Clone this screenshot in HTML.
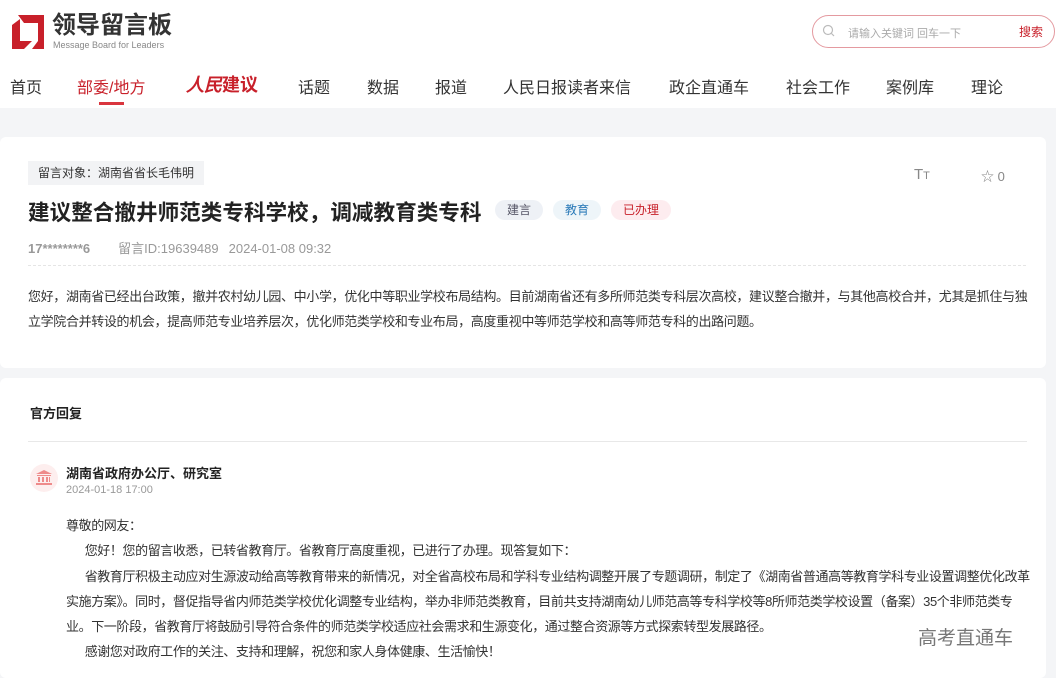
<!DOCTYPE html>
<html><head><meta charset="utf-8"><style>
*{margin:0;padding:0;box-sizing:border-box}
body{width:1056px;height:674px;overflow:hidden;background:#f4f5f7;font-family:"Liberation Sans","Noto Sans CJK SC",sans-serif;color:#333;position:relative}
.hdr{position:absolute;left:0;top:0;width:1056px;height:108px;background:#fff}
.abs{position:absolute;white-space:nowrap}
.nav{top:74px;font-size:16px;color:#333}
.card{position:absolute;left:0;width:1046px;background:#fff;border-radius:6px}
.tag{display:inline-block;font-size:12px;padding:0 12px;height:20px;line-height:20px;border-radius:10px}
.p{font-size:13px;color:#333;letter-spacing:-0.35px}
</style></head><body>
<div class="hdr"></div>
<svg class="abs" style="left:10px;top:13px" width="36" height="36" viewBox="0 0 36 36"><path d="M8 2H34V36H22L28 28V10H14Z" fill="#c8202a"/><path d="M2 12L10 6V28H22L14 36H2Z" fill="#c8202a"/></svg>
<div class="abs" style="left:52px;top:12px;font-size:24px;font-weight:bold;color:#333;line-height:28px">领导留言板</div>
<div class="abs" style="left:53px;top:40px;font-size:9px;color:#888">Message Board for Leaders</div>
<div class="abs" style="left:812px;top:15px;width:243px;height:33px;border:1px solid #e49aa0;border-radius:17px"></div>
<svg class="abs" style="left:822px;top:24px" width="14" height="14" viewBox="0 0 14 14"><circle cx="6" cy="6" r="4.5" fill="none" stroke="#bbb" stroke-width="1.2"/><path d="M9.5 9.5L12 12" stroke="#bbb" stroke-width="1.2"/></svg>
<div class="abs" style="left:848px;top:25px;font-size:11px;color:#aaa">请输入关键词 回车一下</div>
<div class="abs" style="left:1019px;top:23px;font-size:12px;color:#c8202a">搜索</div>
<div class="abs nav" style="left:10px">首页</div>
<div class="abs nav" style="left:77px;color:#c8202a">部委/地方</div>
<div class="abs" style="left:99px;top:102px;width:25px;height:3px;background:#d9353e"></div>
<div class="abs nav" style="left:186px;color:#c8202a;font-weight:bold;top:71px;font-size:18px"><i style="font-family:'Liberation Serif',serif">人民</i>建议</div>
<div class="abs nav" style="left:298px">话题</div>
<div class="abs nav" style="left:367px">数据</div>
<div class="abs nav" style="left:435px">报道</div>
<div class="abs nav" style="left:503px">人民日报读者来信</div>
<div class="abs nav" style="left:669px">政企直通车</div>
<div class="abs nav" style="left:786px">社会工作</div>
<div class="abs nav" style="left:886px">案例库</div>
<div class="abs nav" style="left:971px">理论</div>

<div class="card" style="top:137px;height:231px"></div>
<div class="abs" style="left:28px;top:161px;height:24px;padding:0 10px;line-height:24px;background:#f2f3f5;font-size:12px;color:#333">留言对象：湖南省省长毛伟明</div>
<div class="abs" style="left:914px;top:166px;font-size:15px;color:#888">T<span style="font-size:11px">T</span></div>
<div class="abs" style="left:981px;top:166px;font-size:13px;color:#888">☆ 0</div>
<div class="abs" style="left:28px;top:196px;font-size:21.6px;font-weight:bold;color:#222">建议整合撤井师范类专科学校，调减教育类专科</div>
<div class="abs" style="left:495px;top:200px"><span class="tag" style="background:#eef1f6;color:#556">建言</span><span class="tag" style="background:#eef5f9;color:#2a7ab8;margin-left:10px">教育</span><span class="tag" style="background:#fdecef;color:#c8202a;margin-left:10px">已办理</span></div>
<div class="abs" style="left:28px;top:238px;font-size:13px;color:#999"><b>17********6</b><span style="margin-left:28px">留言ID:19639489</span><span style="margin-left:10px">2024-01-08 09:32</span></div>
<div class="abs" style="left:28px;top:265px;width:998px;border-top:1px dashed #e5e5e5"></div>
<div class="abs p" style="left:28px;top:284px;line-height:25px;white-space:normal;width:1005px">您好，湖南省已经出台政策，撤并农村幼儿园、中小学，优化中等职业学校布局结构。目前湖南省还有多所师范类专科层次高校，建议整合撤并，与其他高校合并，尤其是抓住与独立学院合并转设的机会，提高师范专业培养层次，优化师范类学校和专业布局，高度重视中等师范学校和高等师范专科的出路问题。</div>

<div class="card" style="top:378px;height:300px"></div>
<div class="abs" style="left:30px;top:403px;font-size:13px;font-weight:bold;color:#222">官方回复</div>
<div class="abs" style="left:28px;top:441px;width:999px;border-top:1px solid #e8e8e8"></div>
<div class="abs" style="left:30px;top:464px;width:28px;height:28px;border-radius:50%;background:#fdeeee"></div>
<svg class="abs" style="left:36px;top:470px" width="16" height="15" viewBox="0 0 16 15"><path d="M8 0L16 4H0Z M1 5H15V6H1Z M2 7H4V12H2Z M6 7H8V12H6Z M10 7H12V12H10Z M13 7H14V12H13Z M0 13H16V15H0Z" fill="#ee8a8a"/></svg>
<div class="abs" style="left:66px;top:463px;font-size:13px;font-weight:bold;color:#222">湖南省政府办公厅、研究室</div>
<div class="abs" style="left:66px;top:484px;font-size:11px;color:#999">2024-01-18 17:00</div>
<div class="abs p" style="left:66px;top:513px;line-height:25.3px;letter-spacing:-0.4px">尊敬的网友：<br>&emsp;&ensp;您好！您的留言收悉，已转省教育厅。省教育厅高度重视，已进行了办理。现答复如下：<br>&emsp;&ensp;省教育厅积极主动应对生源波动给高等教育带来的新情况，对全省高校布局和学科专业结构调整开展了专题调研，制定了《湖南省普通高等教育学科专业设置调整优化改革<br>实施方案》。同时，督促指导省内师范类学校优化调整专业结构，举办非师范类教育，目前共支持湖南幼儿师范高等专科学校等8所师范类学校设置（备案）35个非师范类专<br>业。下一阶段，省教育厅将鼓励引导符合条件的师范类学校适应社会需求和生源变化，通过整合资源等方式探索转型发展路径。<br>&emsp;&ensp;感谢您对政府工作的关注、支持和理解，祝您和家人身体健康、生活愉快！</div>
<div class="abs" style="left:918px;top:623px;font-size:19px;color:#777">高考直通车</div>
</body></html>
